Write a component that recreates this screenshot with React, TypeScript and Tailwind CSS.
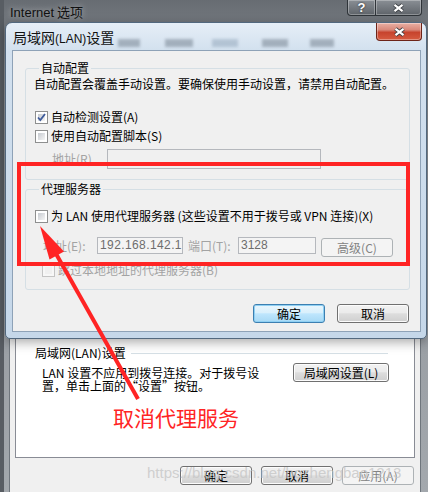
import clsx from 'clsx'
import type { ReactNode } from 'react'

type ButtonKind = 'normal' | 'focused' | 'disabled'

const buttonStyles: Record<ButtonKind, string> = {
  normal:
    'border-[#707070] bg-[linear-gradient(#f2f2f2,#ebebeb_45%,#dddddd_52%,#cfcfcf)] shadow-[inset_0_0_0_1px_#fcfcfc]',
  focused:
    'border-[#3c7fb1] bg-[linear-gradient(#eaf6fd,#d9f0fc_45%,#bee6fd_52%,#a7d9f5)] shadow-[inset_0_0_0_1px_#8fd0f3]',
  disabled: 'border-[#adb2b5] bg-[#f4f4f4] text-[#838383]',
}

function WinButton({
  children,
  kind = 'normal',
  className,
}: {
  children: ReactNode
  kind?: ButtonKind
  className?: string
}) {
  return (
    <div
      className={clsx(
        'flex shrink-0 items-center justify-center rounded-[3px] border text-[12px] leading-[14px]',
        buttonStyles[kind],
        className,
      )}
    >
      {children}
    </div>
  )
}

function Checkbox({ checked, disabled }: { checked?: boolean; disabled?: boolean }) {
  return (
    <span
      className={clsx(
        'relative flex size-[13px] shrink-0 border p-[2px]',
        disabled ? 'border-[#c4c4c4] bg-[#f7f7f7]' : 'border-[#8e8f8f] bg-white',
      )}
    >
      <span
        className={clsx(
          'size-full',
          disabled ? 'bg-[#f0f0f0]' : 'bg-[linear-gradient(135deg,#c6cad0,#f5f5f5)]',
        )}
      />
      {checked && (
        <svg className="absolute inset-0" width="11" height="11" viewBox="0 0 11 11">
          <path d="M2 5.5 L4.3 8 L9 2" fill="none" stroke="#3e5b9b" strokeWidth="1.8" />
        </svg>
      )}
    </span>
  )
}

function CheckRow({
  label,
  checked,
  disabled,
  className,
}: {
  label: string
  checked?: boolean
  disabled?: boolean
  className?: string
}) {
  return (
    <div className={clsx('flex h-[14px] items-center gap-[3px] whitespace-nowrap', className)}>
      <Checkbox checked={checked} disabled={disabled} />
      <span className={disabled ? 'text-[#a3a3a3]' : undefined}>{label}</span>
    </div>
  )
}

function CloseGlyph() {
  return (
    <svg width="13" height="10" viewBox="0 0 13 10">
      <path d="M2.5 1.8 L10.5 8.2 M10.5 1.8 L2.5 8.2" stroke="#3a3d42" strokeWidth="4" />
      <path d="M2.5 1.8 L10.5 8.2 M10.5 1.8 L2.5 8.2" stroke="#ffffff" strokeWidth="2.2" />
    </svg>
  )
}

function CaptionButton({ children, className }: { children: ReactNode; className?: string }) {
  return (
    <div
      className={clsx(
        'flex h-[16px] items-center justify-center border border-t-0 border-[#2f3439] bg-[linear-gradient(#8a8f95,#5f646a)] shadow-[inset_0_0_0_1px_rgba(255,255,255,0.3)]',
        className,
      )}
    >
      {children}
    </div>
  )
}

function InternetOptions() {
  return (
    <div className="ml-[4px] flex h-full flex-col bg-[linear-gradient(#676c72,#8b9096_70px,#a3a8ad)]">
      <div className="flex h-[28px] shrink-0 items-start">
        <span className="pl-[6px] pt-[4px] text-[13px] leading-[16px] text-[#111] [text-shadow:0_0_6px_rgba(255,255,255,0.55)]">
          <span className="font-['Liberation_Sans',sans-serif]">Internet</span> 选项
        </span>
        <div className="ml-auto mr-[6px] flex">
          <CaptionButton className="w-[29px] rounded-bl-[4px]">
            <span className="font-['Liberation_Sans',sans-serif] text-[13px] font-bold leading-[14px] text-white [text-shadow:0_0_2px_#222]">
              ?
            </span>
          </CaptionButton>
          <CaptionButton className="w-[46px] rounded-br-[4px] border-l-0">
            <CloseGlyph />
          </CaptionButton>
        </div>
      </div>

      <div className="ml-[5px] mr-[7px] flex flex-1 flex-col border-x border-t border-[#6f767d] bg-[#f0f0f0]">
        <div className="mx-[5px] mt-[24px] flex flex-1 flex-col justify-end border border-[#898c95] bg-white pb-[28px]">
          <div className="flex h-[14px] items-center">
            <span className="ml-[19px] whitespace-nowrap">局域网(LAN)设置</span>
            <div className="ml-[5px] mr-[26px] h-px flex-1 bg-[#d5dfe5]" />
          </div>
          <div className="mt-[6px] flex items-start">
            <div className="ml-[26px] whitespace-nowrap leading-[13px]">
              <div>LAN 设置不应用到拨号连接。对于拨号设</div>
              <div>置，单击上面的“设置”按钮。</div>
            </div>
            <WinButton className="ml-auto mr-[25px] mt-[-3px] h-[19px] w-[96px]">局域网设置(L)</WinButton>
          </div>
          <div className="ml-[97px] mt-[13px] text-[21px] leading-[24px] text-[#ff2424]">取消代理服务</div>
        </div>

        <div className="mb-[7px] mt-[8px] flex justify-end gap-[9px] pr-[6px]">
          <WinButton className="h-[19px] w-[72px]">确定</WinButton>
          <WinButton className="h-[19px] w-[72px]">取消</WinButton>
          <WinButton kind="disabled" className="h-[19px] w-[72px]">
            应用(A)
          </WinButton>
        </div>
      </div>
    </div>
  )
}

function LanDialog() {
  return (
    <div className="absolute left-[5px] top-[22px] flex h-[317px] w-[422px] flex-col rounded-b-[5px] rounded-t-[7px] border border-[#52687e] bg-[linear-gradient(#e6eef7,#d2e0ee_28px,#c5d7e9)] shadow-[0_3px_12px_rgba(0,0,0,0.35)]">
      <div className="relative flex h-[27px] shrink-0 items-start">
        <span className="pl-[7px] pt-[5px] text-[14px] leading-[18px] text-[#111]">
          局域网<span className="font-['Liberation_Sans',sans-serif] text-[12px]">(LAN)</span>设置
        </span>
        {/* tab labels of the window behind, blurred through the glass */}
        <div className="absolute left-[112px] top-[16px] flex opacity-40 blur-[1.5px]">
          <span className="h-[8px] w-[22px] bg-[#556270]" />
          <span className="ml-[25px] h-[8px] w-[28px] bg-[#556270]" />
          <span className="ml-[19px] h-[8px] w-[26px] bg-[#7d93aa]" />
          <span className="ml-[24px] h-[8px] w-[26px] bg-[#556270]" />
          <span className="ml-[22px] h-[8px] w-[24px] bg-[#556270]" />
        </div>
        <div className="relative ml-auto mr-[4px] flex h-[18px] w-[46px] items-center justify-center rounded-b-[4px] border border-t-0 border-[#6d2418] bg-[linear-gradient(#e9b0a4,#d8887a_40%,#c7432d_55%,#d65b40)] shadow-[inset_0_0_0_1px_rgba(255,255,255,0.35)]">
          <CloseGlyph />
        </div>
      </div>

      <div className="mb-[6px] ml-[6px] mr-[5px] flex flex-1 flex-col border border-[#8ea2b7] bg-[#f0f0f0] pl-[12px] pr-[10px] pt-[10px]">
        <fieldset className="rounded-[3px] border border-[#d5dfe5] pb-[10px] pl-[8px]">
          <legend className="ml-[5px] px-[2px] leading-[14px]">自动配置</legend>
          <p className="mt-[2px] whitespace-nowrap">自动配置会覆盖手动设置。要确保使用手动设置，请禁用自动配置。</p>
          <CheckRow className="ml-[1px] mt-[19px]" checked label="自动检测设置(A)" />
          <CheckRow className="ml-[1px] mt-[5px]" label="使用自动配置脚本(S)" />
          <div className="mt-[6px] flex h-[20px] items-center">
            <span className="ml-[18px] w-[55px] text-[#a3a3a3]">地址(R)</span>
            <div className="h-[20px] w-[214px] border border-[#b5b8bd] bg-[#f0f0f0]" />
          </div>
        </fieldset>

        <fieldset className="mt-[2px] rounded-[3px] border border-[#d5dfe5] pb-[12px] pl-[8px]">
          <legend className="ml-[5px] px-[2px] leading-[14px]">代理服务器</legend>
          <CheckRow className="ml-[1px] mt-[13px]" label="为 LAN 使用代理服务器 (这些设置不用于拨号或 VPN 连接)(X)" />
          <div className="mt-[14px] flex h-[20px] items-start">
            <span className="ml-[9px] mt-[2px] w-[54px] whitespace-nowrap text-[#a3a3a3]">地址(E):</span>
            <div className="h-[17px] w-[86px] overflow-hidden whitespace-nowrap border border-[#b5b8bd] bg-[#f4f4f4] px-[2px] font-['Liberation_Sans',sans-serif] text-[12px] leading-[15px] tracking-[0.4px] text-[#6d6d6d]">
              192.168.142.13
            </div>
            <span className="ml-[5px] mt-[2px] w-[50px] whitespace-nowrap text-[#a3a3a3]">端口(T):</span>
            <div className="h-[17px] w-[78px] border border-[#b5b8bd] bg-[#f4f4f4] px-[2px] font-['Liberation_Sans',sans-serif] text-[12px] leading-[15px] text-[#6d6d6d]">
              3128
            </div>
            <WinButton kind="disabled" className="ml-[5px] mt-[1px] h-[19px] w-[72px]">
              高级(C)
            </WinButton>
          </div>
          <CheckRow className="ml-[8px] mt-[6px]" disabled label="跳过本地地址的代理服务器(B)" />
        </fieldset>

        <div className="mr-[1px] mt-[14px] flex justify-end gap-[12px]">
          <WinButton kind="focused" className="h-[19px] w-[72px]">
            确定
          </WinButton>
          <WinButton className="h-[19px] w-[72px]">取消</WinButton>
        </div>
      </div>
    </div>
  )
}

function Annotation() {
  return (
    <>
      <div className="pointer-events-none absolute left-[17px] top-[162px] h-[104px] w-[393px] border-4 border-[#ff2424]" />
      <svg className="pointer-events-none absolute left-0 top-0" width="428" height="492">
        <line x1="138" y1="399" x2="55" y2="252" stroke="#ff2424" strokeWidth="4" />
        <polygon points="40,226 64,251.5 49.5,259.5" fill="#ff2424" />
      </svg>
      <span className="pointer-events-none absolute left-[147px] top-[464px] whitespace-nowrap font-['Liberation_Sans',sans-serif] text-[15px] leading-[18px] text-[#c6c6c6]/80">
        https://blog.csdn.net/bozhengbao1213
      </span>
    </>
  )
}

export default function App() {
  return (
    <div className="relative h-[492px] w-[428px] overflow-hidden bg-[#585d63] font-['Noto_Sans_CJK_SC',sans-serif] text-[12px] leading-[14px] text-black">
      <InternetOptions />
      <LanDialog />
      <Annotation />
    </div>
  )
}
